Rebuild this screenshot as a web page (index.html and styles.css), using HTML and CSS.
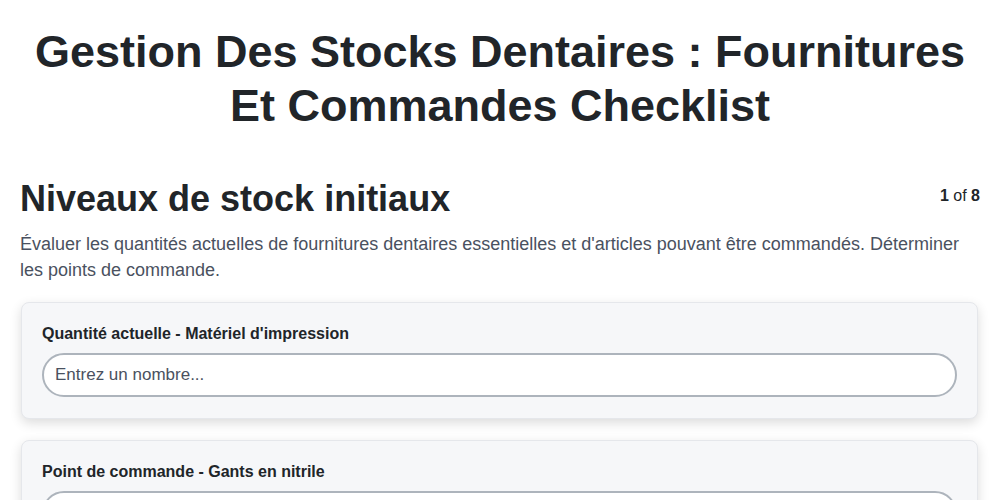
FILE: index.html
```html
<!DOCTYPE html>
<html lang="fr">
<head>
    <meta charset="UTF-8">
    <meta name="viewport" content="width=device-width, initial-scale=1.0">
    <title>Gestion Des Stocks Dentaires</title>
    <link rel="stylesheet" href="styles.css">
</head>
<body>
    <div class="page">
        <h1 class="title">Gestion Des Stocks Dentaires : Fournitures Et Commandes Checklist</h1>

        <div class="section-head">
            <h2>Niveaux de stock initiaux</h2>
            <div class="step"><b>1</b> of <b>8</b></div>
        </div>
        <p class="desc">Évaluer les quantités actuelles de fournitures dentaires essentielles et d'articles pouvant être commandés. Déterminer les points de commande.</p>

        <div class="card">
            <label class="field-label">Quantité actuelle - Matériel d'impression</label>
            <input class="field-input" type="text" placeholder="Entrez un nombre...">
        </div>

        <div class="card">
            <label class="field-label">Point de commande - Gants en nitrile</label>
            <input class="field-input" type="text" placeholder="Entrez un nombre...">
        </div>
    </div>
</body>
</html>
```

FILE: styles.css
```css
body {
    margin: 0;
    font-family: "Liberation Sans", Arial, sans-serif;
    background-color: #fff;
    color: #212529;
}

.page {
    padding: 0 20px;
}

.title {
    margin: 25px 0 0;
    font-size: 45px;
    line-height: 54px;
    text-align: center;
    font-weight: bold;
    color: #212529;
}

.section-head {
    display: flex;
    justify-content: space-between;
    align-items: flex-start;
    margin-top: 44px;
}

.section-head h2 {
    margin: 0;
    font-size: 36px;
    line-height: 44px;
    font-weight: bold;
}

.step {
    font-size: 16px;
    padding-top: 10px;
    color: #212529;
}

.desc {
    margin: 10px 0 19px;
    font-size: 18px;
    line-height: 26px;
    color: #4a5160;
}

.card {
    display: flex;
    flex-direction: column;
    gap: 8px;
    background-color: #f6f7f9;
    border: 1px solid #e5e7eb;
    border-radius: 8px;
    padding: 20px 20px 21px;
    margin: 0 2px 21px 1px;
    box-shadow: 0 4px 12px rgba(0, 0, 0, 0.14);
}

.field-label {
    font-size: 16px;
    font-weight: bold;
    line-height: 22px;
    color: #212529;
}

.field-input {
    box-sizing: border-box;
    height: 44px;
    width: 100%;
    border: 2px solid #adb4bc;
    border-radius: 22px;
    padding: 0 11px;
    font-family: "Liberation Sans", Arial, sans-serif;
    font-size: 17px;
    background: #fff;
    outline: none;
}

.field-input::placeholder {
    color: #4a5160;
}
```
